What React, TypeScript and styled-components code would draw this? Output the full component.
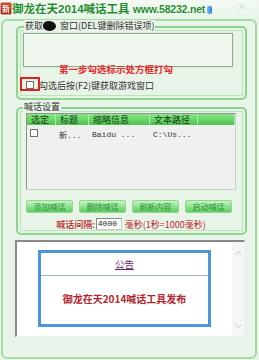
import React from "react";
import styled, { createGlobalStyle } from "styled-components";

const GlobalStyle = createGlobalStyle`
    html, body {
        margin: 0;
        padding: 0;
    }
    body {
        width: 259px;
        height: 360px;
        overflow: hidden;
        font-family: "Noto Sans CJK SC", "Liberation Sans", sans-serif;
        font-size: 9px;
        color: #222;
    }
`;

const BG = "#e8f4e8";

const Window = styled.div`
    width: 259px;
    height: 360px;
    box-sizing: border-box;
    display: flex;
    flex-direction: column;
    background: linear-gradient(#f3faf3 0px, ${BG} 20px);
`;

const TitleBar = styled.div`
    height: 19px;
    display: flex;
    align-items: center;
    padding-right: 13px;
`;

const AppIcon = styled.div`
    width: 10px;
    height: 11px;
    margin-top: -2px;
    background: linear-gradient(#c8463e, #8a1e1c);
    border: 1px solid #e0a080;
    border-radius: 2px;
    color: #fff3e0;
    font-size: 8px;
    font-weight: bold;
    line-height: 11px;
    text-align: center;
    overflow: hidden;
`;

const Title = styled.div`
    font-family: "Liberation Sans", "Noto Sans CJK SC", sans-serif;
    font-size: 11.5px;
    font-weight: bold;
    color: #1f8c2c;
    text-shadow: 0 0 2px #ffffff, 0 0 1px #ffffff;
    white-space: nowrap;
    line-height: 19px;
`;

const Url = styled.span`
    font-size: 10.5px;
    letter-spacing: -0.2px;
`;

const DbIcon = styled.div`
    width: 5px;
    height: 8px;
    margin-left: 2px;
    border-radius: 2px;
    background: linear-gradient(90deg, #7fc0ff, #2a7ed8);
`;

const Close = styled.div`
    margin-left: auto;
    margin-top: -6px;
    color: #d4e8d4;
    font-family: "DejaVu Sans", sans-serif;
    font-size: 10px;
    font-weight: bold;
`;

const Client = styled.div`
    flex: 1;
    margin: 0 2px 1px 1px;
    border: 2px solid #a4dca4;
    border-radius: 6px;
    padding: 5px 8px 0 13px;
    display: flex;
    flex-direction: column;
`;

const GroupBox = styled.div<{ $gap?: number; $pad: string }>`
    display: flex;
    flex-direction: column;
    margin-top: ${(p) => p.$gap ?? 0}px;
    padding: ${(p) => p.$pad};
    border: 2px solid #8ed48e;
    border-radius: 5px;
    box-shadow: inset 0 0 0 2px ${BG}, inset 0 0 0 3px #b8e4b8;
`;

const Legend = styled.span`
    align-self: flex-start;
    margin: -8px 0 0 1px;
    padding: 0 1px;
    line-height: 12px;
    background: ${BG};
    color: #333;
    white-space: nowrap;
`;

const Blot = styled.span`
    display: inline-block;
    width: 13px;
    height: 10px;
    margin: 0 4px 0 0;
    vertical-align: -2px;
    border-radius: 45% 55% 50% 50%;
    background: #111;
`;

const CaptureBox = styled.div`
    margin-top: 1px;
    height: 34px;
    box-sizing: border-box;
    border: 1px solid #9aa89a;
    box-shadow: 0 0 0 1px #d8efd8;
    background: #eef6ee;
`;

const Hint = styled.div`
    margin-top: -4px;
    align-self: center;
    margin-left: -24px;
    line-height: 12px;
    font-size: 9.5px;
    font-weight: bold;
    color: #e8282c;
`;

const CheckRow = styled.div`
    display: flex;
    align-items: center;
    height: 14px;
    margin-top: 3px;
    color: #333;
`;

const CheckBox = styled.span<{ $mark?: boolean }>`
    position: relative;
    display: inline-block;
    width: 8px;
    height: 8px;
    box-sizing: border-box;
    border: 1px solid #707070;
    background: #fff;

    &::after {
        content: "";
        display: ${(p) => (p.$mark ? "block" : "none")};
        position: absolute;
        left: -7px;
        top: -5px;
        width: 20px;
        height: 14px;
        box-sizing: border-box;
        border: 2px solid #e2221e;
    }
`;

const CheckLabel = styled.span`
    margin-left: 5px;
    white-space: nowrap;
`;

const ListView = styled.div`
    height: 77px;
    box-sizing: border-box;
    border: 1px solid #8c968c;
    border-right-color: #c8d0c8;
    border-bottom-color: #c8d0c8;
    background: #f0f0f0;
`;

const Cols = "29px 33px 61px 48px 1fr";

const HeaderRow = styled.div`
    display: grid;
    grid-template-columns: ${Cols};
    height: 11px;
    background: linear-gradient(#8ae68a, #4cc44c);
`;

const HeaderCell = styled.div`
    padding-left: 4px;
    line-height: 11px;
    color: #143c14;
    border-right: 1px solid #a8eca8;
    white-space: nowrap;
    overflow: hidden;
`;

const DataRow = styled.div`
    display: grid;
    grid-template-columns: ${Cols};
    height: 14px;
    margin-top: 2px;
    align-items: center;
`;

const Cell = styled.div`
    padding-left: 3px;
    font-family: "Liberation Mono", "Noto Sans CJK SC", monospace;
    font-size: 8px;
    color: #333;
    white-space: nowrap;
`;

const ButtonRow = styled.div`
    display: flex;
    gap: 6px;
    margin-top: 10px;
`;

const GreenButton = styled.button`
    width: 47px;
    height: 13px;
    padding: 0;
    border: 1px solid #92d492;
    border-radius: 2px;
    background: linear-gradient(#c4f4c4, #5fcf5f);
    color: #2a9232;
    font-family: "Noto Sans CJK SC", sans-serif;
    font-size: 8px;
    line-height: 11px;
`;

const IntervalRow = styled.div`
    display: flex;
    align-items: center;
    justify-content: center;
    margin-top: 5px;
    height: 12px;
    color: #b8262a;
`;

const IntervalLabel = styled.span`
    font-weight: 500;
    margin-right: 1px;
`;

const NumberBox = styled.div`
    width: 26px;
    height: 12px;
    box-sizing: border-box;
    border: 1px solid #888;
    border-right-color: #ccc;
    border-bottom-color: #ccc;
    background: #fff;
    color: #222;
    font-family: "Liberation Mono", monospace;
    font-size: 8px;
    line-height: 10px;
    padding-left: 1px;
    margin-right: 3px;
`;

const NoticePanel = styled.div`
    display: flex;
    margin: 5px 2px 0 -1px;
    height: 97px;
    box-sizing: border-box;
    border: 1px solid #f4f4f4;
    border-left: 2px solid #8a8a8a;
    border-top: 2px solid #8a8a8a;
    background: #fff;
`;

const NoticeArea = styled.div`
    flex: 1;
    display: flex;
    justify-content: center;
    padding-top: 8px;
`;

const Notice = styled.div`
    width: 173px;
    height: 77px;
    box-sizing: border-box;
    border: 3px solid #4a96dc;
    display: flex;
    flex-direction: column;
`;

const NoticeTitle = styled.div`
    height: 22px;
    border-bottom: 1px solid #a0b0c0;
    display: flex;
    align-items: center;
    justify-content: center;
    color: #6a2a6a;
    text-decoration: underline;
    font-size: 9.5px;
`;

const NoticeBody = styled.div`
    flex: 1;
    display: flex;
    align-items: center;
    justify-content: center;
    color: #b4262c;
    font-size: 10px;
    font-weight: bold;
    padding-bottom: 3px;
`;

const ScrollBar = styled.div`
    width: 12px;
    background: #f6f6f6;
    display: flex;
    flex-direction: column;
    justify-content: space-between;
    align-items: center;
    padding: 9px 0 8px;
`;

const Arrow = ({ down }: { down?: boolean }) => (
    <svg width="7" height="4" viewBox="0 0 7 4">
        <path
            d={down ? "M0.5 0.5 L3.5 3.5 L6.5 0.5" : "M0.5 3.5 L3.5 0.5 L6.5 3.5"}
            fill="none"
            stroke="#c4c4c4"
            strokeWidth="1"
        />
    </svg>
);

const buttons = ["添加喊话", "删除喊话", "刷新内容", "启动喊话"];

const App: React.FC = () => {
    return (
        <>
            <GlobalStyle />
            <Window>
                <TitleBar>
                    <AppIcon>新</AppIcon>
                    <Title>
                        御龙在天2014喊话工具 <Url>www.58232.net</Url>
                    </Title>
                    <DbIcon />
                    <Close>×</Close>
                </TitleBar>
                <Client>
                    <GroupBox $pad="0 12px 6px 5px">
                        <Legend>
                            获取<Blot />窗口(DEL键删除错误项)
                        </Legend>
                        <CaptureBox />
                        <Hint>第一步勾选标示处方框打勾</Hint>
                        <CheckRow>
                            <CheckBox $mark style={{ marginLeft: 3 }} />
                            <CheckLabel>勾选后按(F2)键获取游戏窗口</CheckLabel>
                        </CheckRow>
                    </GroupBox>

                    <GroupBox $gap={7} $pad="0 9px 3px 8px">
                        <Legend style={{ marginLeft: -3 }}>喊话设置</Legend>
                        <ListView>
                            <HeaderRow>
                                <HeaderCell>选定</HeaderCell>
                                <HeaderCell>标题</HeaderCell>
                                <HeaderCell>缩略信息</HeaderCell>
                                <HeaderCell>文本路径</HeaderCell>
                                <HeaderCell />
                            </HeaderRow>
                            <DataRow>
                                <Cell>
                                    <CheckBox />
                                </Cell>
                                <Cell>新...</Cell>
                                <Cell>Baidu ...</Cell>
                                <Cell>C:\Us...</Cell>
                                <Cell />
                            </DataRow>
                        </ListView>
                        <ButtonRow>
                            {buttons.map((b) => (
                                <GreenButton key={b}>{b}</GreenButton>
                            ))}
                        </ButtonRow>
                        <IntervalRow>
                            <IntervalLabel>喊话间隔:</IntervalLabel>
                            <NumberBox>4000</NumberBox>
                            <span>毫秒(1秒=1000毫秒)</span>
                        </IntervalRow>
                    </GroupBox>

                    <NoticePanel>
                        <NoticeArea>
                            <Notice>
                                <NoticeTitle>公告</NoticeTitle>
                                <NoticeBody>御龙在天2014喊话工具发布</NoticeBody>
                            </Notice>
                        </NoticeArea>
                        <ScrollBar>
                            <Arrow />
                            <Arrow down />
                        </ScrollBar>
                    </NoticePanel>
                </Client>
            </Window>
        </>
    );
};

export default App;
